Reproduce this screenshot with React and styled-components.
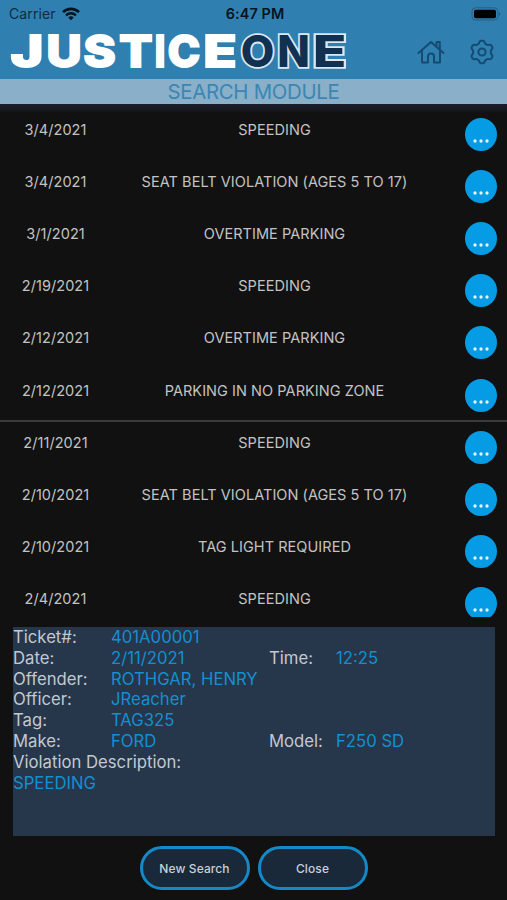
import React from "react";
import styled, { createGlobalStyle } from "styled-components";

const GlobalStyle = createGlobalStyle`
  * {
    box-sizing: border-box;
  }
  body {
    margin: 0;
    background: #111;
    font-family: Inter, "Liberation Sans", sans-serif;
  }
`;

const Screen = styled.div`
  display: flex;
  flex-direction: column;
  width: 507px;
  height: 900px;
  overflow: hidden;
  background: #111;
`;

const StatusBar = styled.div`
  display: grid;
  grid-template-columns: 1fr auto 1fr;
  align-items: center;
  height: 27px;
  padding: 0 6px 0 9px;
  background: #307fb1;
  font-size: 14px;
`;

const Carrier = styled.div`
  display: flex;
  align-items: center;
  gap: 6px;
  color: #102c40;
  letter-spacing: 0.1px;
`;

const Clock = styled.span`
  color: #06131d;
  font-size: 14.4px;
  font-weight: 600;
  letter-spacing: 0.1px;
`;

const Battery = styled.div`
  display: flex;
  justify-self: end;
`;

const Header = styled.header`
  display: flex;
  justify-content: space-between;
  height: 52px;
  padding-right: 12px;
  background: #307fb1;
`;

const LogoDrawing = styled.svg`
  flex: none;
  width: 355px;
  height: 68px;
  margin: -8px 0;
`;

const HeaderIcons = styled.div`
  display: flex;
  align-items: center;
  gap: 24px;
  height: 50px;
`;

const ModuleTitle = styled.div`
  flex: none;
  height: 25px;
  background: #8aafc9;
  color: #3b86b3;
  font-size: 20.4px;
  line-height: 26px;
  text-align: center;
  letter-spacing: -0.3px;
`;

const List = styled.div`
  flex: none;
  height: 513px;
  padding-top: 4px;
  overflow: hidden;
  background: linear-gradient(#1a1d28 0, #181a22 5px, #111 9px);
`;

const Row = styled.div`
  display: grid;
  grid-template-columns: 111px 327px 1fr;
  height: ${props => (props.$divided ? "53.11px" : "52.11px")};
  margin-bottom: ${props => (props.$divided ? "-1px" : "0")};
  border-bottom: ${props => (props.$divided ? "2px solid #3b3b3b" : "none")};
  color: #c3c3c3;
  font-size: 14.5px;
  line-height: 18px;
  text-align: center;
`;

const Cell = styled.span`
  padding-top: 13px;
  letter-spacing: 0.05px;
  white-space: nowrap;
`;

const MoreButton = styled.button`
  display: flex;
  justify-content: center;
  align-items: flex-start;
  justify-self: end;
  width: 32px;
  height: 33px;
  margin: 10px 10px 0 0;
  padding: 21px 0 0;
  border: 0;
  border-radius: 50%;
  background: #059be5;
`;

const Details = styled.section`
  flex: none;
  height: 209px;
  margin: 10px 12px 0 13px;
  background: #26364b;
  color: #c3c9d0;
  font-size: 16.7px;
  line-height: 20px;
`;

const DetailLine = styled.div`
  display: grid;
  grid-template-columns: 98px 158px 67px 1fr;
  height: 20.8px;
  white-space: nowrap;
`;

const Value = styled.span`
  color: #148fd0;
`;

const Actions = styled.div`
  display: flex;
  justify-content: center;
  gap: 8px;
  margin-top: 10px;
`;

const ActionButton = styled.button`
  width: 110px;
  height: 44px;
  padding: 0;
  border: 3px solid #1489c7;
  border-radius: 22px;
  background: #19293a;
  color: #c8d0d6;
  font-family: inherit;
  font-size: 12px;
  font-weight: 500;
  letter-spacing: 0.1px;
`;

const tickets = [
  { date: "3/4/2021", violation: "SPEEDING" },
  { date: "3/4/2021", violation: "SEAT BELT VIOLATION (AGES 5 TO 17)" },
  { date: "3/1/2021", violation: "OVERTIME PARKING" },
  { date: "2/19/2021", violation: "SPEEDING" },
  { date: "2/12/2021", violation: "OVERTIME PARKING" },
  { date: "2/12/2021", violation: "PARKING IN NO PARKING ZONE", divided: true },
  { date: "2/11/2021", violation: "SPEEDING" },
  { date: "2/10/2021", violation: "SEAT BELT VIOLATION (AGES 5 TO 17)" },
  { date: "2/10/2021", violation: "TAG LIGHT REQUIRED" },
  { date: "2/4/2021", violation: "SPEEDING" },
];

const details = [
  ["Ticket#:", "401A00001"],
  ["Date:", "2/11/2021", "Time:", "12:25"],
  ["Offender:", "ROTHGAR, HENRY"],
  ["Officer:", "JReacher"],
  ["Tag:", "TAG325"],
  ["Make:", "FORD", "Model:", "F250 SD"],
];

// letter, centre, horizontal stretch
const logoLetters = [
  ["J", 27, 1.27],
  ["U", 64, 1.11],
  ["S", 99.5, 1.12],
  ["T", 136, 1.13],
  ["I", 160, 0.85],
  ["C", 184, 1],
  ["E", 220, 1.25],
  ["O", 257.5, 1, true],
  ["N", 293.5, 0.98, true],
  ["E", 329.5, 1.27, true],
];

const WifiIcon = () => (
  <svg width="18" height="14" viewBox="0 0 18 14" fill="none" stroke="#06131d">
    <path d="M1 5.1a11.6 11.6 0 0 1 16 0" strokeWidth="2.6" />
    <path d="M4 8.3a7.3 7.3 0 0 1 10 0" strokeWidth="2.4" />
    <path d="M9 13.2 6.3 10.6a4 4 0 0 1 5.4 0z" fill="#06131d" stroke="none" />
  </svg>
);

const BatteryIcon = () => (
  <svg width="30" height="14" viewBox="0 0 30 14">
    <rect x="1" y="0.8" width="26" height="12.2" rx="3.5" fill="none" stroke="#236088" />
    <rect x="3" y="2.7" width="22" height="8.6" rx="1.8" fill="#000" />
    <path d="M28.3 5v4c1.4-.5 1.4-3.5 0-4z" fill="#1d557a" />
  </svg>
);

const Logo = () => (
  <LogoDrawing viewBox="0 19 355 68" fontFamily="Inter, sans-serif" fontWeight="800" fontSize="43.5" textAnchor="middle">
    {logoLetters.map(([letter, x, stretch, dark], index) => (
      <text
        key={index}
        transform={`translate(${x} 67.3) scale(${stretch} 1)`}
        fill={dark ? "#12304f" : "#fff"}
        stroke={dark ? "#dbe8f3" : "#fff"}
        strokeWidth={dark ? 3.6 : 2}
        paintOrder="stroke"
      >
        {letter}
      </text>
    ))}
  </LogoDrawing>
);

const HomeIcon = () => (
  <svg width="28" height="26" viewBox="0 0 28 26" fill="none" stroke="#144b70" strokeWidth="2" strokeLinecap="round" strokeLinejoin="round">
    <path d="M1.5 14 14 3 26.5 14" />
    <path d="M19.5 7V3h3.3v7" />
    <path d="M5 12.5v11h6v-6a3 3 0 0 1 6 0v6h6v-11" />
  </svg>
);

const gearPoints = Array.from({ length: 120 }, (_, i) => {
  const angle = (i * Math.PI) / 60;
  const radius = 10.1 + 1.3 * Math.tanh(2 * Math.cos(6 * angle));
  return `${13 + radius * Math.sin(angle)},${13 - radius * Math.cos(angle)}`;
}).join(" ");

const GearIcon = () => (
  <svg width="26" height="26" viewBox="0 0 26 26" fill="none" stroke="#144b70" strokeWidth="2" strokeLinejoin="round">
    <polygon points={gearPoints} />
    <circle cx="13" cy="13" r="3.6" />
  </svg>
);

const DotsIcon = () => (
  <svg width="18" height="4" viewBox="0 0 18 4" fill="#e9f6fd">
    <circle cx="3" cy="2" r="1.65" />
    <circle cx="9" cy="2" r="1.65" />
    <circle cx="15" cy="2" r="1.65" />
  </svg>
);

const App = () => {
  return (
    <Screen>
      <GlobalStyle />
      <StatusBar>
        <Carrier>Carrier <WifiIcon /></Carrier>
        <Clock>6:47 PM</Clock>
        <Battery><BatteryIcon /></Battery>
      </StatusBar>
      <Header>
        <Logo />
        <HeaderIcons>
          <HomeIcon />
          <GearIcon />
        </HeaderIcons>
      </Header>
      <ModuleTitle>SEARCH MODULE</ModuleTitle>
      <List>
        {tickets.map((ticket, index) => (
          <Row key={index} $divided={ticket.divided}>
            <Cell>{ticket.date}</Cell>
            <Cell>{ticket.violation}</Cell>
            <MoreButton aria-label="More"><DotsIcon /></MoreButton>
          </Row>
        ))}
      </List>
      <Details>
        {details.map(([label, value, secondLabel, secondValue]) => (
          <DetailLine key={label}>
            <span>{label}</span>
            <Value>{value}</Value>
            <span>{secondLabel}</span>
            <Value>{secondValue}</Value>
          </DetailLine>
        ))}
        <DetailLine>Violation Description:</DetailLine>
        <DetailLine><Value>SPEEDING</Value></DetailLine>
      </Details>
      <Actions>
        <ActionButton>New Search</ActionButton>
        <ActionButton>Close</ActionButton>
      </Actions>
    </Screen>
  );
};

export default App;
